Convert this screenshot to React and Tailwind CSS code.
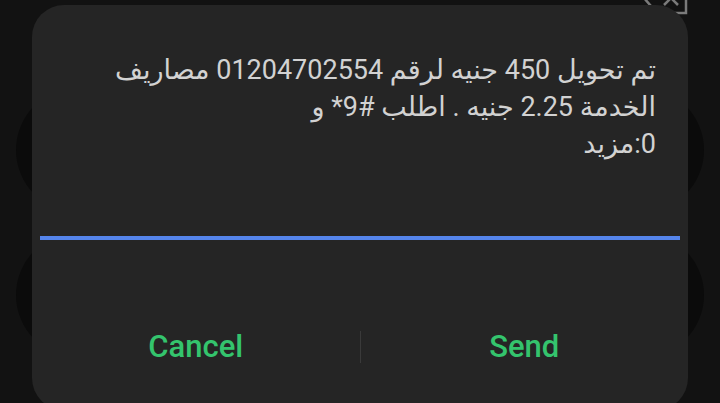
import React from "react";

export default function App() {
  return (
    <div className="relative w-[720px] h-[403px] overflow-hidden bg-[#121212]" style={{ fontFamily: 'Roboto, "DejaVu Sans", sans-serif' }}>
      {/* keypad buttons behind the dialog */}
      <div className="absolute left-[16px] top-[87px] w-[126px] h-[126px] rounded-full bg-[#0b0b0b]" />
      <div className="absolute left-[16px] top-[232px] w-[126px] h-[126px] rounded-full bg-[#0b0b0b]" />
      <div className="absolute left-[578px] top-[87px] w-[126px] h-[126px] rounded-full bg-[#0b0b0b]" />
      <div className="absolute left-[578px] top-[232px] w-[126px] h-[126px] rounded-full bg-[#0b0b0b]" />
      {/* backspace icon peeking at top right */}
      <svg className="absolute left-[640px] top-[-20px]" width="50" height="36" viewBox="0 0 50 36" fill="none" stroke="#7a7a7a" strokeWidth="2.5">
        <path d="M4 18 L17 33 H46 V3 H17 Z" />
        <path d="M24 11 L38 25 M38 11 L24 25" />
      </svg>

      <div className="relative mx-8 mt-[5px] h-[405px] rounded-[32px] bg-[#252525] flex flex-col">
        <div dir="rtl" className="pt-[47px] pr-8 pl-8 text-right text-[27px] leading-[37px] text-[#d2d2d2]">
          <div className="whitespace-nowrap">تم تحويل 450 جنيه لرقم 01204702554 مصاريف</div>
          <div className="whitespace-nowrap">الخدمة 2.25 جنيه . اطلب {"\u2066*9#\u2069"} و</div>
          <div className="whitespace-nowrap">{"\u20660\u2069:مزيد"}</div>
        </div>
        <div className="mx-2 mt-[73px] h-[4px] bg-[#5585ec]" />
        <div className="mt-[75px] h-16 flex items-center">
          <div className="flex-1 text-center text-[31px] font-medium text-[#34c46d]">Cancel</div>
          <div className="w-px h-8 bg-[#3a3a3a]" />
          <div className="flex-1 text-center text-[31px] font-medium text-[#34c46d]">Send</div>
        </div>
      </div>
    </div>
  );
}
